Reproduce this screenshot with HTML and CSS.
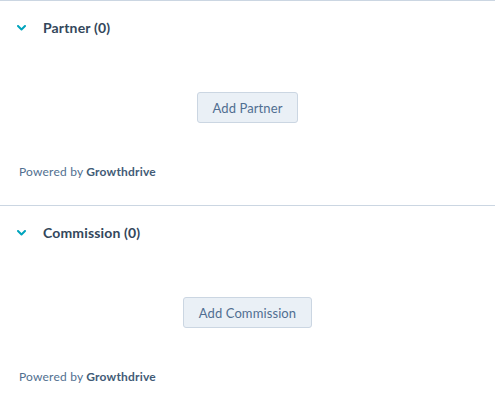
FILE: index.html
```html
<!DOCTYPE html>
<html>
<head>
<meta charset="utf-8">
<link rel="stylesheet" href="styles.css">
</head>
<body>
<section class="card">
  <div class="card-header">
    <svg class="chevron" width="9" height="6" viewBox="0 0 9 6"><path d="M1 1 L4.5 4.5 L8 1" fill="none" stroke="#00a4bd" stroke-width="2" stroke-linecap="round" stroke-linejoin="round"/></svg>
    <span class="title">Partner (0)</span>
  </div>
  <div class="card-body">
    <button class="btn">Add Partner</button>
  </div>
  <div class="powered">Powered by <strong>Growthdrive</strong></div>
</section>
<section class="card">
  <div class="card-header">
    <svg class="chevron" width="9" height="6" viewBox="0 0 9 6"><path d="M1 1 L4.5 4.5 L8 1" fill="none" stroke="#00a4bd" stroke-width="2" stroke-linecap="round" stroke-linejoin="round"/></svg>
    <span class="title">Commission (0)</span>
  </div>
  <div class="card-body">
    <button class="btn">Add Commission</button>
  </div>
  <div class="powered">Powered by <strong>Growthdrive</strong></div>
</section>
</body>
</html>
```
FILE: styles.css
```css
html, body {
  margin: 0;
  padding: 0;
  background: #ffffff;
  font-family: Lato, "Noto Sans", sans-serif;
  color: #33475b;
}
.card {
  border-top: 1px solid #cbd6e2;
  height: 204px;
  display: flex;
  flex-direction: column;
}
.card-header {
  display: flex;
  align-items: center;
  height: 20px;
  padding: 17px 0 0 17px;
}
.chevron {
  display: block;
  margin-right: 17px;
}
.title {
  font-size: 14px;
  font-weight: 700;
  line-height: 20px;
  letter-spacing: 0.15px;
  color: #33475b;
}
.card-body {
  display: flex;
  justify-content: center;
  padding-top: 54px;
}
.btn {
  height: 31px;
  padding: 0 15px;
  background: #eaf0f6;
  border: 1px solid #cbd6e2;
  border-radius: 3px;
  font-family: Lato, "Noto Sans", sans-serif;
  font-size: 13px;
  letter-spacing: 0.1px;
  color: #506e91;
  margin: 0;
}
.powered {
  margin-top: 41px;
  padding-left: 19px;
  font-size: 12px;
  line-height: 16px;
  letter-spacing: 0.2px;
  color: #516f90;
}
.powered strong {
  font-weight: 700;
  color: #425b76;
}
```
